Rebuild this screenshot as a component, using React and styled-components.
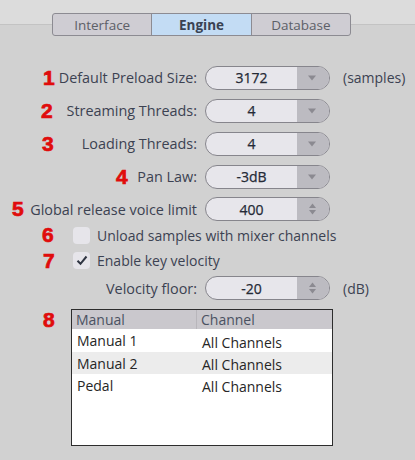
import React from 'react';
import styled, { createGlobalStyle } from 'styled-components';

const GlobalStyle = createGlobalStyle`
  html, body {
    margin: 0;
    padding: 0;
    background: #d1d1d1;
  }
  body {
    font-family: 'Open Sans', 'Noto Sans', sans-serif;
  }
`;

const Page = styled.div`
  width: 415px;
  height: 460px;
  overflow: hidden;
  background: linear-gradient(
    to bottom,
    #dcdcdc 0,
    #dcdcdc 24px,
    #c3c3c3 24px,
    #c3c3c3 25px,
    #d1d1d1 25px
  );
  padding-top: 13px;
  box-sizing: border-box;
`;

const TabBar = styled.div`
  display: flex;
  margin-left: 52px;
  width: 299px;
  height: 23px;
  box-sizing: border-box;
  border: 1px solid #8c8b92;
  border-radius: 3px;
  overflow: hidden;
  background: #cfcdd3;
`;

const Tab = styled.div`
  flex: 1;
  display: flex;
  align-items: center;
  justify-content: center;
  font-size: 13.5px;
  color: ${(p) => (p.$active ? '#3a4252' : '#5d6068')};
  font-weight: ${(p) => (p.$active ? 700 : 400)};
  background: ${(p) => (p.$active ? '#c3dcf4' : 'transparent')};
  & + & {
    border-left: 1px solid #8c8b92;
  }
`;

const Form = styled.div`
  display: flex;
  flex-direction: column;
  margin-top: 25px;
`;

const Row = styled.div`
  position: relative;
  display: grid;
  grid-template-columns: 197px 125px auto;
  column-gap: 8px;
  align-items: center;
  height: ${(p) => p.$h}px;
`;

const CheckRow = styled.div`
  position: relative;
  display: flex;
  align-items: center;
  gap: 7px;
  padding-left: 73px;
  height: ${(p) => p.$h}px;
`;

const Label = styled.div`
  text-align: right;
  font-size: 14.4px;
  color: #3c4252;
  white-space: nowrap;
`;

const Unit = styled.div`
  margin-left: 5px;
  font-size: 14px;
  color: #3c4252;
`;

const Marker = styled.span`
  position: absolute;
  left: ${(p) => p.$x}px;
  top: 50%;
  transform: translateY(-52%);
  font-family: 'Liberation Sans', Arial, sans-serif;
  font-weight: 900;
  font-size: 21px;
  color: #e00c0c;
  -webkit-text-stroke: 0.7px #e00c0c;
  line-height: 1;
`;

const Combo = styled.div`
  display: flex;
  height: 24px;
  box-sizing: border-box;
  border: 1px solid #86858c;
  border-radius: 12px;
  overflow: hidden;
  background: #e7e6eb;
`;

const ComboValue = styled.div`
  flex: 1;
  display: flex;
  align-items: center;
  justify-content: center;
  font-size: 14px;
  font-weight: 400;
  color: #252a36;
  -webkit-text-stroke: 0.25px #252a36;
`;

const ComboButton = styled.div`
  width: 30px;
  display: flex;
  align-items: center;
  justify-content: center;
  background: #bcbbc1;
  padding-right: 2px;
`;

const DownArrow = () => (
  <svg width="8" height="6" viewBox="0 0 8 6">
    <path d="M0 0.5h8L4 5.5z" fill="#8b8a91" />
  </svg>
);

const SpinArrows = () => (
  <svg width="7" height="12" viewBox="0 0 7 12">
    <path d="M0 5L3.5 0.5L7 5z" fill="#8b8a91" />
    <path d="M0 7L3.5 11.5L7 7z" fill="#8b8a91" />
  </svg>
);

const Box = styled.div`
  width: 17px;
  height: 17px;
  border-radius: 4px;
  background: #e6e5ea;
  display: flex;
  align-items: center;
  justify-content: center;
`;

const CheckText = styled.span`
  font-size: 14px;
  color: #3c4252;
  white-space: nowrap;
`;

const TableWrap = styled.div`
  position: relative;
  margin-top: 9px;
  margin-left: 71px;
  width: 262px;
  height: 137px;
  box-sizing: border-box;
  border: 1px solid #2d2d2d;
  background: #ffffff;
`;

const TableGrid = styled.div`
  display: grid;
  grid-template-columns: 124px 1fr;
`;

const HeadCell = styled.div`
  height: 19px;
  display: flex;
  align-items: center;
  padding-left: 4px;
  font-size: 14px;
  color: #4a5262;
  background: #cac8cd;
  & + & {
    border-left: 1px solid #b8b6bb;
  }
`;

const Cell = styled.div`
  height: ${(p) => (p.$first ? 23 : 22)}px;
  display: flex;
  align-items: center;
  padding-left: ${(p) => (p.$col === 0 ? 5 : 6)}px;
  padding-top: ${(p) => (p.$col === 0 ? 0 : 3)}px;
  box-sizing: border-box;
  font-size: 14px;
  color: #262626;
  background: ${(p) => (p.$alt ? '#ececec' : '#ffffff')};
`;

const TableMarker = styled(Marker)`
  left: -29px;
  top: -1px;
  transform: none;
`;

const combos = [
  { n: '1', x: 43, label: 'Default Preload Size:', value: '3172', unit: '(samples)', h: 33 },
  { n: '2', x: 41, label: 'Streaming Threads:', value: '4', h: 33 },
  { n: '3', x: 42, label: 'Loading Threads:', value: '4', h: 33 },
  { n: '4', x: 116, label: 'Pan Law:', value: '-3dB', h: 33 },
  { n: '5', x: 12, label: 'Global release voice limit', value: '400', spin: true, h: 32 },
];

const rows = [
  ['Manual 1', 'All Channels'],
  ['Manual 2', 'All Channels'],
  ['Pedal', 'All Channels'],
];

const Check = () => (
  <svg width="12" height="11" viewBox="0 0 12 11">
    <path d="M1.5 5.8L4.5 8.8L10.5 1.5" fill="none" stroke="#2f3542" strokeWidth="2" />
  </svg>
);

export default function App() {
  return (
    <Page>
      <GlobalStyle />
      <TabBar>
        <Tab>Interface</Tab>
        <Tab $active>Engine</Tab>
        <Tab>Database</Tab>
      </TabBar>

      <Form>
        {combos.map((c) => (
          <Row key={c.n} $h={c.h}>
            <Marker $x={c.x}>{c.n}</Marker>
            <Label>{c.label}</Label>
            <Combo>
              <ComboValue>{c.value}</ComboValue>
              <ComboButton>{c.spin ? <SpinArrows /> : <DownArrow />}</ComboButton>
            </Combo>
            {c.unit && <Unit>{c.unit}</Unit>}
          </Row>
        ))}

        <CheckRow $h={20}>
          <Marker $x={42}>6</Marker>
          <Box />
          <CheckText>Unload samples with mixer channels</CheckText>
        </CheckRow>
        <CheckRow $h={31}>
          <Marker $x={43}>7</Marker>
          <Box>
            <Check />
          </Box>
          <CheckText>Enable key velocity</CheckText>
        </CheckRow>

        <Row $h={24}>
          <Label>Velocity floor:</Label>
          <Combo>
            <ComboValue>-20</ComboValue>
            <ComboButton>
              <SpinArrows />
            </ComboButton>
          </Combo>
          <Unit>(dB)</Unit>
        </Row>

        <TableWrap>
          <TableMarker>8</TableMarker>
          <TableGrid>
            <HeadCell>Manual</HeadCell>
            <HeadCell>Channel</HeadCell>
            {rows.map((r, i) =>
              r.map((v, j) => (
                <Cell key={`${i}-${j}`} $col={j} $alt={i === 1} $first={i === 0}>
                  {v}
                </Cell>
              ))
            )}
          </TableGrid>
        </TableWrap>
      </Form>
    </Page>
  );
}
